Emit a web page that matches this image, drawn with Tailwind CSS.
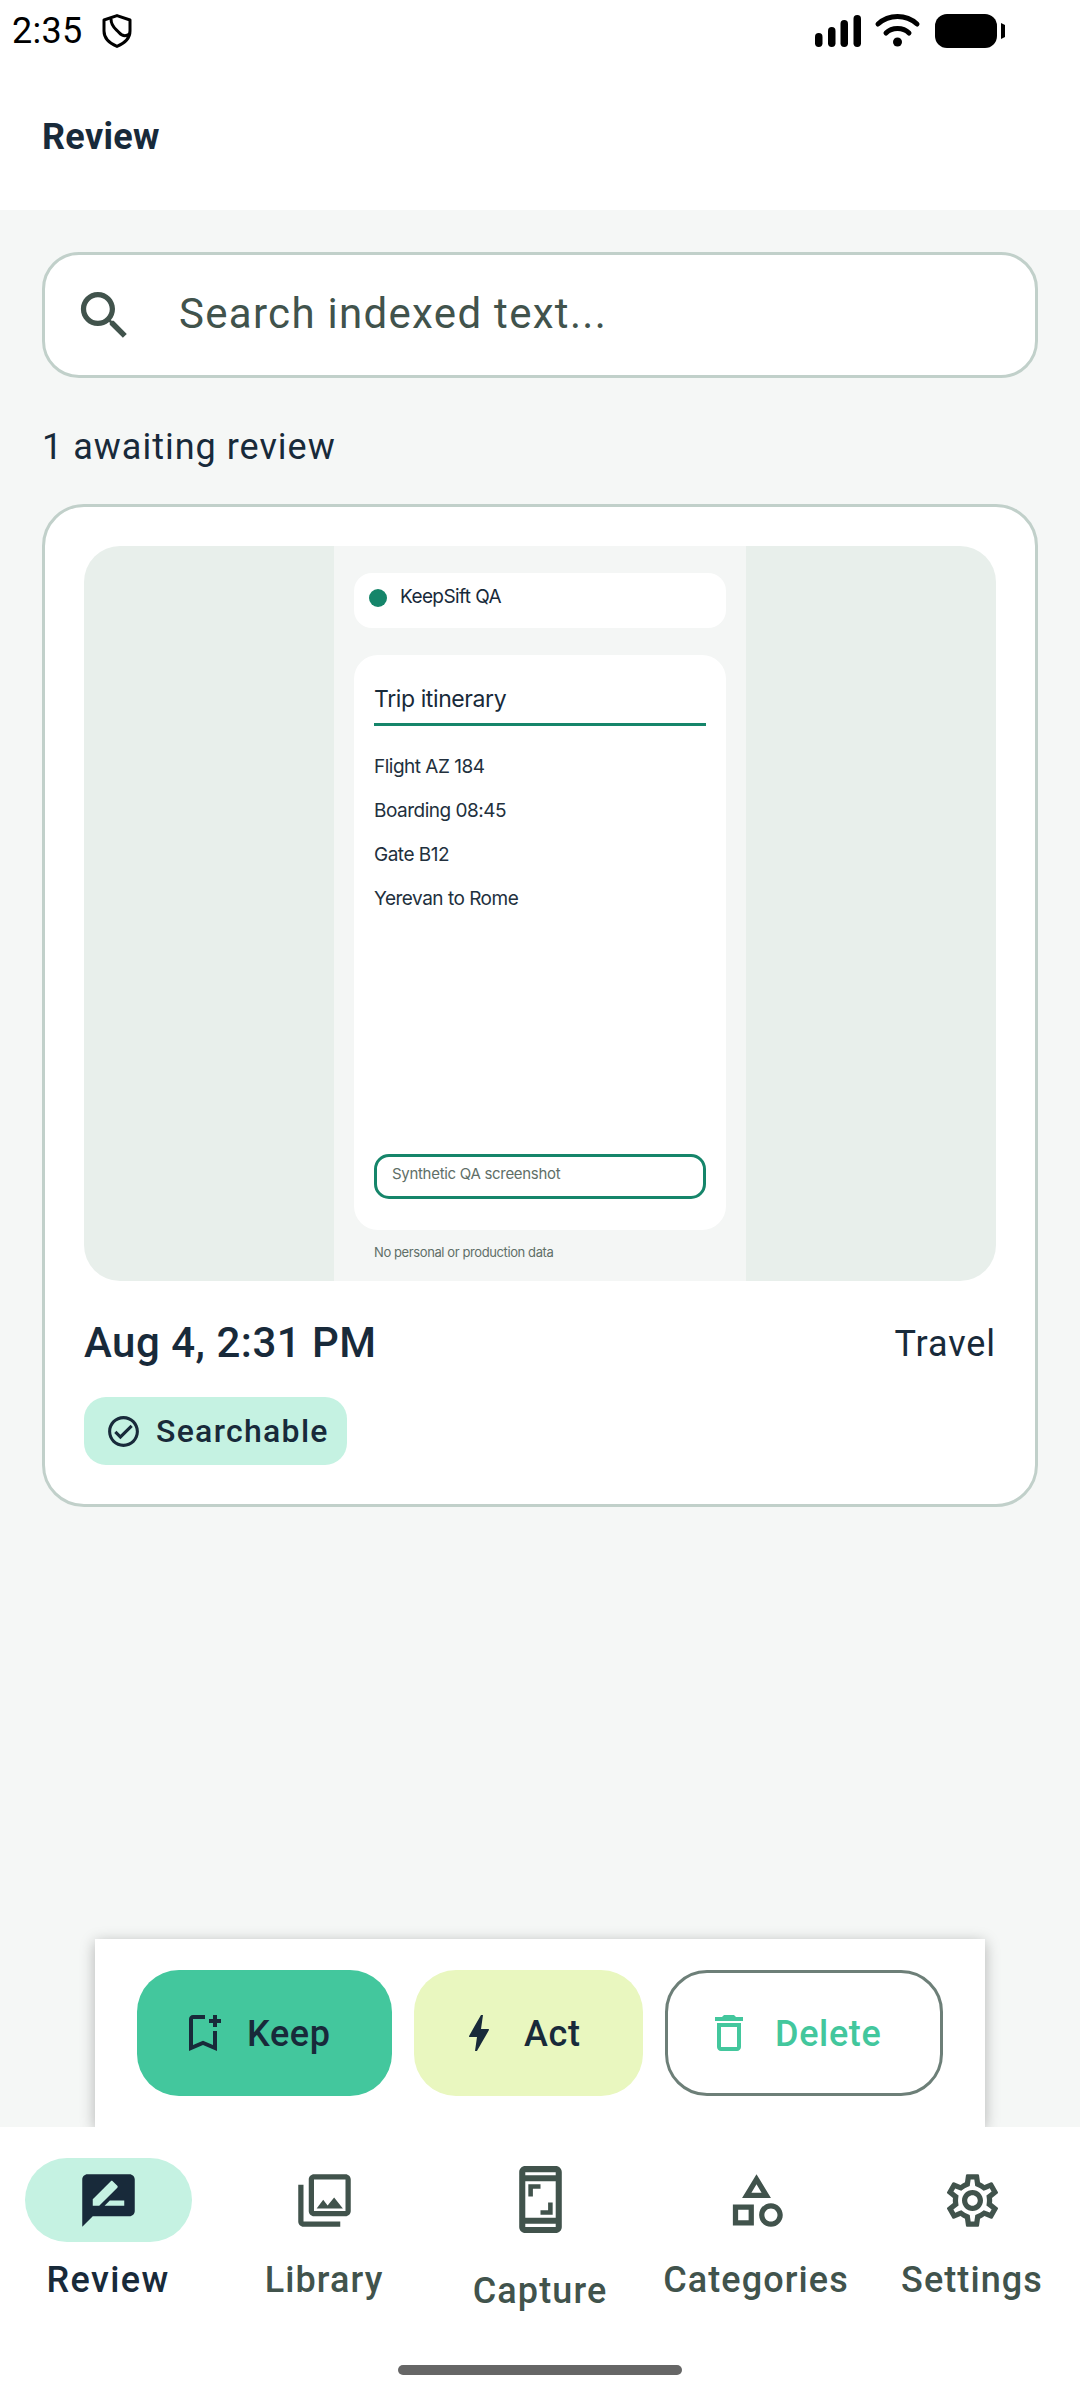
<!DOCTYPE html>
<html>
<head>
<meta charset="utf-8">
<script src="https://cdn.jsdelivr.net/npm/@tailwindcss/browser@4"></script>
</head>
<body>
<div class="w-[1080px] h-[2400px] flex flex-col overflow-hidden bg-white font-['Roboto',sans-serif] text-[#182a3a]">
  <header class="h-[210px] shrink-0 bg-white flex flex-col">
    <div class="h-[62px] flex items-center justify-between pl-[12px] pr-[75px] text-black">
      <div class="flex items-center gap-[19px]">
        <span class="text-[36px] leading-[42px] tracking-[0.3px]">2:35</span>
        <svg width="30" height="34" viewBox="0 0 30 34" fill="none" stroke="#000" stroke-width="3"><path d="M15 1.6 L28 6 V17 C28 25 22 29.5 15 32.4 C8 29.5 2 25 2 17 V6 Z" stroke-linejoin="round"/><path d="M9 5 C9 13 14 15 17 18.5 C20 22 24 22.5 27.5 20"/></svg>
      </div>
      <svg width="190" height="34" viewBox="815 14 190 34" fill="#000">
        <rect x="815" y="33" width="7.5" height="14" rx="3.7"/><rect x="828" y="27" width="7.5" height="20" rx="3.7"/><rect x="840.5" y="20" width="7.5" height="27" rx="3.7"/><rect x="853.5" y="15" width="7.5" height="32" rx="3.7"/>
        <path d="M878 24 C889 14 906 14 917 24" fill="none" stroke="#000" stroke-width="5" stroke-linecap="round"/>
        <path d="M886 33 C892 27 903 27 909 33" fill="none" stroke="#000" stroke-width="5" stroke-linecap="round"/>
        <circle cx="897.5" cy="42" r="4.5"/>
        <rect x="935" y="14" width="62" height="34" rx="12"/><path d="M1001 23 L1005 25 V37 L1001 39 Z"/>
      </svg>
    </div>
    <div class="flex-1 flex items-center pl-[42px] pt-[2px]">
      <h1 class="text-[36px] leading-[48px] font-bold tracking-[0.3px]">Review</h1>
    </div>
  </header>

  <main class="flex-1 min-h-0 bg-[#f5f7f6] flex flex-col px-[42px] pt-[42px]">
    <div class="h-[126px] shrink-0 bg-white border-[3px] border-[#c1d0ca] rounded-[37px] flex items-center pl-[28px] gap-[43px]">
      <svg width="63" height="63" viewBox="0 0 24 24" fill="#41534c" class="shrink-0"><path d="M15.5 14h-.79l-.28-.27C15.41 12.59 16 11.11 16 9.5 16 5.91 13.09 3 9.5 3S3 5.91 3 9.5 5.91 16 9.5 16c1.61 0 3.09-.59 4.23-1.57l.27.28v.79l5 4.99L20.49 19l-4.99-5zm-6 0C7.01 14 5 11.99 5 9.5S7.01 5 9.5 5 14 7.01 14 9.5 11.99 14 9.5 14z"/></svg>
      <span class="mb-[2px] text-[42px] leading-[56px] tracking-[1.3px] text-[#41534c]">Search indexed text...</span>
    </div>
    <p class="mt-[48px] text-[36px] leading-[42px] tracking-[1px] text-[#182a3a]">1 awaiting review</p>

    <section class="mt-[36px] h-[1003px] shrink-0 bg-white border-[3px] border-[#c1d0ca] rounded-[42px] p-[39px] flex flex-col">
      <div class="h-[735px] shrink-0 rounded-[36px] bg-[#e8efeb] flex justify-center overflow-hidden font-['Inter',sans-serif]">
        <div class="w-[412px] bg-[#f4f6f5] px-[20px] pt-[27px] flex flex-col">
          <div class="h-[55px] bg-white rounded-[18px] flex items-center pl-[15px] gap-[13px] pb-[6px] text-[19px] tracking-[-0.6px] text-[#182a3a]">
            <span class="w-[18px] h-[18px] rounded-full bg-[#15856a]"></span>
            <span>KeepSift QA</span>
          </div>
          <div class="mt-[27px] h-[575px] bg-white rounded-[24px] px-[20px] pt-[29px] flex flex-col">
            <div class="text-[23px] leading-[30px] tracking-[-0.4px] text-[#182a3a]">Trip itinerary</div>
            <div class="mt-[9px] h-[3px] bg-[#15856a]"></div>
            <div class="mt-[29px] flex flex-col gap-[20px] text-[19px] leading-[24px] tracking-[-0.5px] text-[#22303d]">
              <div>Flight AZ 184</div>
              <div>Boarding 08:45</div>
              <div>Gate B12</div>
              <div>Yerevan to Rome</div>
            </div>
            <div class="mt-auto mb-[31px] h-[45px] border-[3px] border-[#15856a] rounded-[15px] pl-[15px] pb-[4px] flex items-center text-[15px] tracking-[-0.3px] text-[#5f6f68]">Synthetic QA screenshot</div>
          </div>
          <div class="mt-[13px] pl-[20px] text-[13px] leading-[18px] tracking-[-0.4px] text-[#5f6f68]">No personal or production data</div>
        </div>
      </div>
      <div class="mt-[34px] flex items-center justify-between h-[56px]">
        <span class="text-[42px] leading-[56px] font-medium tracking-[0.5px]">Aug 4, 2:31 PM</span>
        <span class="mt-[2px] text-[36px] leading-[48px] tracking-[0.9px]">Travel</span>
      </div>
      <div class="mt-[26px] w-[263px] h-[68px] rounded-[22px] bg-[#c5f2e2] flex items-center pl-[21px] gap-[14px]">
        <svg width="37" height="37" viewBox="0 0 24 24" fill="#182a3a" class="shrink-0"><path d="M12 2C6.48 2 2 6.48 2 12s4.48 10 10 10 10-4.48 10-10S17.52 2 12 2zm0 18c-4.41 0-8-3.59-8-8s3.59-8 8-8 8 3.59 8 8-3.59 8-8 8zm4.59-12.42L10 14.17l-2.59-2.58L6 13l4 4 8-8z"/></svg>
        <span class="text-[32px] leading-[42px] font-medium tracking-[1.3px]">Searchable</span>
      </div>
    </section>

    <div class="mt-auto mx-[53px] h-[188px] shrink-0 bg-white shadow-[0_3px_14px_rgba(0,0,0,0.28)] flex items-start gap-[22px] px-[42px] pt-[31px]">
      <button class="w-[255px] h-[126px] rounded-[42px] bg-[#43c79d] flex items-center pl-[42px] text-[#182a3a] text-[36px] font-medium tracking-[0.65px]">
        <svg width="48" height="48" viewBox="0 0 24 24" fill="#182a3a" class="shrink-0"><path d="M17 11v6.97l-5-2.14-5 2.14V5h6V3H7c-1.1 0-2 .9-2 2v16l7-3 7 3V11h-2zm4-4h-2v2h-2V7h-2V5h2V3h2v2h2v2z"/></svg>
        <span class="ml-[20px] mt-[2px]">Keep</span>
      </button>
      <button class="w-[229px] h-[126px] rounded-[42px] bg-[#e9f7bf] flex items-center pl-[41px] text-[#182a3a] text-[36px] font-medium tracking-[0.65px]">
        <svg width="48" height="48" viewBox="0 0 24 24" fill="#182a3a" class="shrink-0"><path d="M11 21h-1l1-7H7.5c-.58 0-.57-.32-.38-.66.19-.34.05-.08.07-.12C8.48 10.94 10.42 7.54 13 3h1l-1 7h3.5c.49 0 .56.33.47.51l-.07.15C12.96 17.55 11 21 11 21z"/></svg>
        <span class="ml-[21px] mt-[2px]">Act</span>
      </button>
      <button class="w-[278px] h-[126px] rounded-[42px] bg-white border-[3px] border-[#6d7f78] flex items-center pl-[37px] text-[#43c79d] text-[36px] font-medium tracking-[0.65px]">
        <svg width="48" height="48" viewBox="0 0 24 24" fill="#43c79d" class="shrink-0"><path d="M16 9v10H8V9h8m-1.5-6h-5l-1 1H5v2h14V4h-3.5l-1-1zM18 7H6v12c0 1.1.9 2 2 2h8c1.1 0 2-.9 2-2V7z"/></svg>
        <span class="ml-[22px] mt-[2px]">Delete</span>
      </button>
    </div>
  </main>

  <nav class="h-[273px] shrink-0 bg-white relative z-10 grid grid-cols-5 pt-[31px] text-[36px] leading-[48px] tracking-[1.1px] font-medium text-[#41534c]">
    <div class="flex flex-col items-center">
      <div class="w-[167px] h-[84px] rounded-full bg-[#c5f2e2] flex items-center justify-center">
        <svg width="63" height="63" viewBox="0 0 24 24" fill="#182a3a"><path d="M20 2H4c-1.1 0-2 .9-2 2v18l4-4h14c1.1 0 2-.9 2-2V4c0-1.1-.9-2-2-2zM6 14v-2.47l6.88-6.88c.2-.2.51-.2.71 0l1.77 1.77c.2.2.2.51 0 .71L8.47 14H6zm12 0h-7.5l2-2H18v2z"/></svg>
      </div>
      <span class="mt-[14px] text-[#182a3a] tracking-[1.4px]">Review</span>
    </div>
    <div class="flex flex-col items-center">
      <div class="h-[84px] flex items-center justify-center">
        <svg width="63" height="63" viewBox="0 0 24 24" fill="#41534c"><path d="M20 4v12H8V4h12m0-2H8c-1.1 0-2 .9-2 2v12c0 1.1.9 2 2 2h12c1.1 0 2-.9 2-2V4c0-1.1-.9-2-2-2zm-8.5 9.67l1.69 2.26 2.48-3.1L19 15H9zM2 6v14c0 1.1.9 2 2 2h14v-2H4V6H2z"/></svg>
      </div>
      <span class="mt-[14px]">Library</span>
    </div>
    <div class="flex flex-col items-center">
      <div class="h-[95px] pt-[5px]">
        <svg width="73" height="73" viewBox="0 0 24 24" fill="#41534c"><path d="M17 1.01L7 1c-1.1 0-2 .9-2 2v18c0 1.1.9 2 2 2h10c1.1 0 2-.9 2-2V3c0-1.1-.9-1.99-2-1.99zM17 21H7v-1h10v1zm0-3H7V6h10v12zm0-14H7V3h10v1zM9.5 8.5H12V7H8v4h1.5V8.5zM12 17h4v-4h-1.5v2.5H12V17z"/></svg>
      </div>
      <span class="mt-[14px]">Capture</span>
    </div>
    <div class="flex flex-col items-center">
      <div class="h-[84px] flex items-center justify-center">
        <svg width="63" height="63" viewBox="0 0 24 24" fill="#41534c"><path d="M12 2l-5.5 9h11L12 2zm0 3.84L13.93 9h-3.87L12 5.84zM17.5 13c-2.49 0-4.5 2.01-4.5 4.5s2.01 4.5 4.5 4.5 4.5-2.01 4.5-4.5-2.01-4.5-4.5-4.5zm0 7c-1.38 0-2.5-1.12-2.5-2.5s1.12-2.5 2.5-2.5 2.5 1.12 2.5 2.5-1.12 2.5-2.5 2.5zM3 21.5h8v-8H3v8zm2-6h4v4H5v-4z"/></svg>
      </div>
      <span class="mt-[14px]">Categories</span>
    </div>
    <div class="flex flex-col items-center">
      <div class="h-[84px] flex items-center justify-center">
        <svg width="63" height="63" viewBox="0 0 24 24" fill="#41534c"><path d="M19.43 12.98c.04-.32.07-.64.07-.98 0-.34-.03-.66-.07-.98l2.11-1.65c.19-.15.24-.42.12-.64l-2-3.46c-.09-.16-.26-.25-.44-.25-.06 0-.12.01-.17.03l-2.49 1c-.52-.4-1.08-.73-1.69-.98l-.38-2.65C14.46 2.18 14.25 2 14 2h-4c-.25 0-.46.18-.49.42l-.38 2.65c-.61.25-1.17.59-1.69.98l-2.49-1c-.06-.02-.12-.03-.18-.03-.17 0-.34.09-.43.25l-2 3.46c-.13.22-.07.49.12.64l2.11 1.65c-.04.32-.07.65-.07.98 0 .33.03.66.07.98l-2.11 1.65c-.19.15-.24.42-.12.64l2 3.46c.09.16.26.25.44.25.06 0 .12-.01.17-.03l2.49-1c.52.4 1.08.73 1.69.98l.38 2.65c.03.24.24.42.49.42h4c.25 0 .46-.18.49-.42l.38-2.65c.61-.25 1.17-.59 1.69-.98l2.49 1c.06.02.12.03.18.03.17 0 .34-.09.43-.25l2-3.46c.12-.22.07-.49-.12-.64l-2.11-1.65zm-1.98-1.71c.04.31.05.52.05.73 0 .21-.02.43-.05.73l-.14 1.13.89.7 1.08.84-.7 1.21-1.27-.51-1.04-.42-.9.68c-.43.32-.84.56-1.25.73l-1.06.43-.16 1.13-.2 1.35h-1.4l-.19-1.35-.16-1.13-1.06-.43c-.43-.18-.83-.41-1.23-.71l-.91-.7-1.06.43-1.27.51-.7-1.21 1.08-.84.89-.7-.14-1.13c-.03-.31-.05-.54-.05-.74s.02-.43.05-.73l.14-1.13-.89-.7-1.08-.84.7-1.21 1.27.51 1.04.42.9-.68c.43-.32.84-.56 1.25-.73l1.06-.43.16-1.13.2-1.35h1.39l.19 1.35.16 1.13 1.06.43c.43.18.83.41 1.23.71l.91.7 1.06-.43 1.27-.51.7 1.21-1.07.85-.89.7.14 1.13zM12 8c-2.21 0-4 1.79-4 4s1.79 4 4 4 4-1.79 4-4-1.79-4-4-4zm0 6c-1.1 0-2-.9-2-2s.9-2 2-2 2 .9 2 2-.9 2-2 2z"/></svg>
      </div>
      <span class="mt-[14px]">Settings</span>
    </div>
    <div class="absolute left-[398px] top-[238px] w-[284px] h-[10px] rounded-full bg-[#666666]"></div>
  </nav>
</div>
</body>
</html>
